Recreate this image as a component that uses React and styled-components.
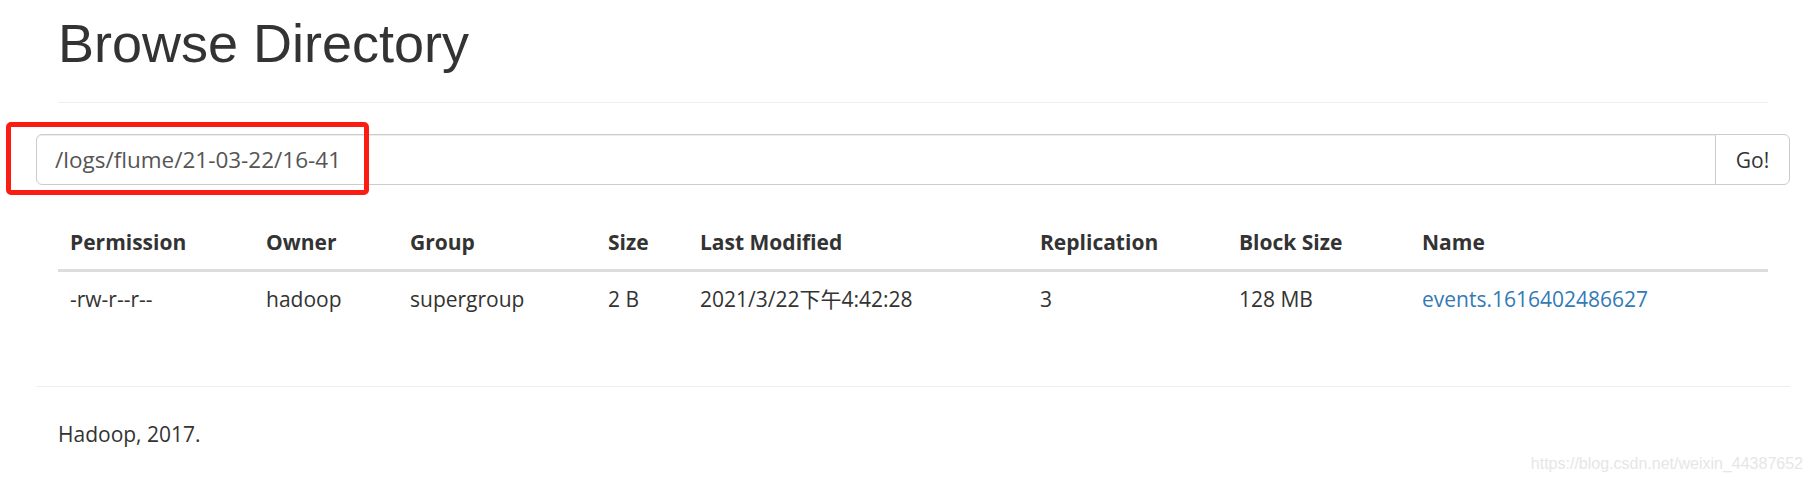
import React from 'react';
import styled, { createGlobalStyle } from 'styled-components';

const GlobalStyle = createGlobalStyle`
  html, body { margin: 0; padding: 0; background: #fff; }
  body {
    font-family: "Open Sans", "Noto Sans CJK SC", sans-serif;
    font-size: 21px;
    line-height: 30px;
    color: #333;
  }
  * { box-sizing: border-box; }
`;

const Page = styled.div`
  position: relative;
  width: 1812px;
  height: 482px;
  overflow: hidden;
  padding: 0 22px 0 36px;
`;

const Inner = styled.div`
  padding: 0 22px;
`;

const PageHeader = styled.div`
  padding-top: 14px;
  padding-bottom: 14px;
  border-bottom: 1px solid #eee;
  margin-bottom: 31px;
`;

const Title = styled.h1`
  margin: 0 0 15px;
  font-family: "Liberation Sans", Arial, sans-serif;
  font-weight: 400;
  font-size: 54px;
  line-height: 59px;
  color: #333;
`;

const SearchRow = styled.form`
  display: flex;
  height: 51px;
  margin: 0 0 30px;
`;

const PathInput = styled.input`
  flex: 1;
  min-width: 0;
  height: 51px;
  padding: 0 18px;
  border: 1px solid #ccc;
  border-radius: 6px 0 0 6px;
  box-shadow: inset 0 1px 1px rgba(0, 0, 0, 0.075);
  font-family: "Open Sans", sans-serif;
  font-size: 22.5px;
  color: #555;
  outline: none;
`;

const GoButton = styled.button`
  width: 75px;
  height: 51px;
  margin-left: -1px;
  border: 1px solid #ccc;
  border-radius: 0 6px 6px 0;
  background: #fff;
  color: #333;
  font-family: "Open Sans", sans-serif;
  font-size: 21px;
  padding: 0;
`;

const Table = styled.table`
  width: 100%;
  table-layout: fixed;
  border-collapse: collapse;
  border-spacing: 0;
  margin-bottom: 60px;
`;

const Th = styled.th`
  text-align: left;
  font-weight: 700;
  padding: 12px;
  line-height: 30px;
  border-bottom: 3px solid #ddd;
  white-space: nowrap;
`;

const Td = styled.td`
  padding: 12px;
  line-height: 30px;
  border-top: 1px solid #ddd;
  white-space: nowrap;
`;

const NameLink = styled.a`
  color: #337ab7;
  text-decoration: none;
`;

const FooterRule = styled.hr`
  margin: 0 0 32px;
  border: 0;
  border-top: 1px solid #eee;
`;

const FooterText = styled.p`
  margin: 0;
  padding: 0 22px;
`;

const Annotation = styled.div`
  position: absolute;
  left: 6px;
  top: 122px;
  width: 363px;
  height: 73px;
  border: 5px solid #fb1d14;
  border-radius: 5px;
  pointer-events: none;
`;

const Watermark = styled.div`
  position: absolute;
  right: 9px;
  top: 455px;
  font-family: "Liberation Sans", Arial, sans-serif;
  font-size: 16px;
  line-height: 18px;
  color: #e6e6e6;
`;

const columns = [
  { label: 'Permission', width: 196 },
  { label: 'Owner', width: 144 },
  { label: 'Group', width: 198 },
  { label: 'Size', width: 92 },
  { label: 'Last Modified', width: 340 },
  { label: 'Replication', width: 199 },
  { label: 'Block Size', width: 183 },
  { label: 'Name', width: null },
];

const rows = [
  {
    permission: '-rw-r--r--',
    owner: 'hadoop',
    group: 'supergroup',
    size: '2 B',
    modified: '2021/3/22下午4:42:28',
    replication: '3',
    blockSize: '128 MB',
    name: 'events.1616402486627',
  },
];

export default function App() {
  return (
    <>
      <GlobalStyle />
      <Page>
        <Inner>
          <PageHeader>
            <Title>Browse Directory</Title>
          </PageHeader>
        </Inner>
        <SearchRow onSubmit={(e) => e.preventDefault()}>
          <PathInput type="text" defaultValue="/logs/flume/21-03-22/16-41" />
          <GoButton type="submit">Go!</GoButton>
        </SearchRow>
        <Inner>
          <Table>
            <colgroup>
              {columns.map((c) => (
                <col key={c.label} style={c.width ? { width: c.width } : undefined} />
              ))}
            </colgroup>
            <thead>
              <tr>
                {columns.map((c) => (
                  <Th key={c.label}>{c.label}</Th>
                ))}
              </tr>
            </thead>
            <tbody>
              {rows.map((r) => (
                <tr key={r.name}>
                  <Td>{r.permission}</Td>
                  <Td>{r.owner}</Td>
                  <Td>{r.group}</Td>
                  <Td>{r.size}</Td>
                  <Td>{r.modified}</Td>
                  <Td>{r.replication}</Td>
                  <Td>{r.blockSize}</Td>
                  <Td>
                    <NameLink href="#">{r.name}</NameLink>
                  </Td>
                </tr>
              ))}
            </tbody>
          </Table>
        </Inner>
        <FooterRule />
        <FooterText>Hadoop, 2017.</FooterText>
        <Annotation />
        <Watermark>https://blog.csdn.net/weixin_44387652</Watermark>
      </Page>
    </>
  );
}
